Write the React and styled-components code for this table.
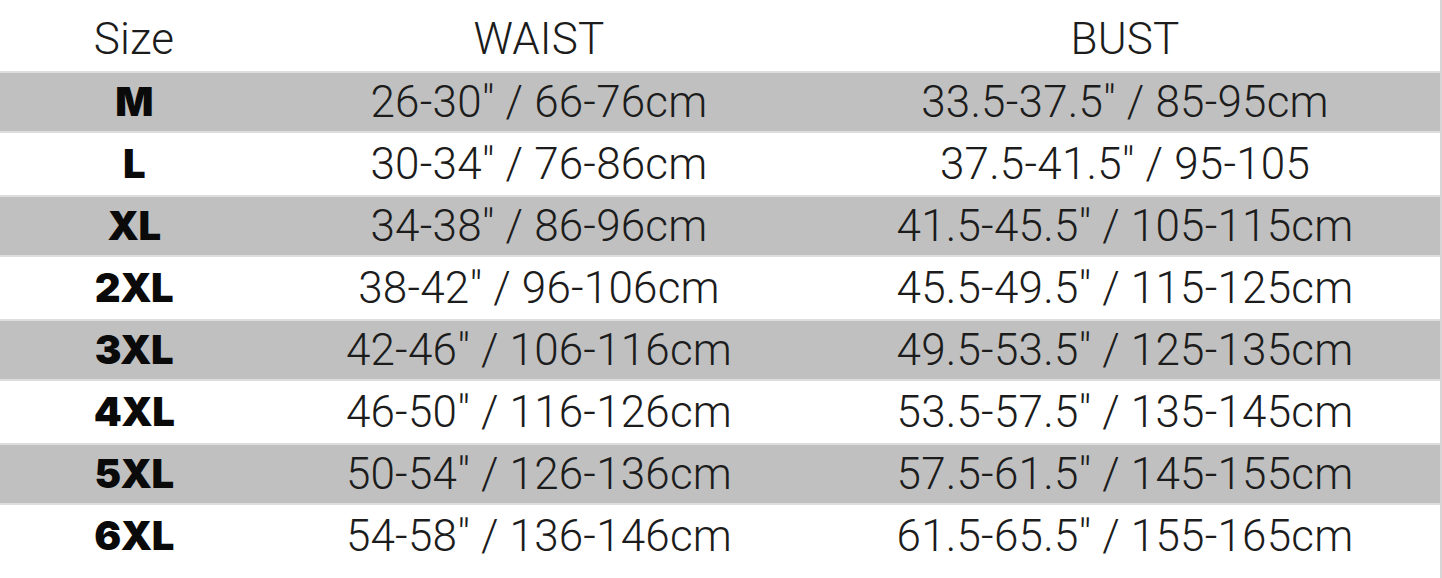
import React from 'react'
import styled, { createGlobalStyle } from 'styled-components'

const GlobalStyle = createGlobalStyle`
  html, body {
    margin: 0;
    padding: 0;
    background: #ffffff;
  }

  body {
    font-family: Roboto, 'Liberation Sans', sans-serif;
    color: #1c1c1c;
  }
`

const Chart = styled.div`
  width: 1440px;
  height: 578px;
  border-right: 2px solid #d6d6d6;
  background: #ffffff;
`

const Row = styled.div`
  display: grid;
  grid-template-columns: 268px 542px 630px;
  align-items: center;
  box-sizing: border-box;
  height: ${({ $header }) => ($header ? '71px' : '62px')};
  padding-top: ${({ $header }) => ($header ? '6px' : '0')};
  background: ${({ $shaded }) => ($shaded ? '#c0c0c0' : 'transparent')};
  border-top: 2px solid ${({ $shaded }) => ($shaded ? '#dedede' : 'transparent')};
  border-bottom: 2px solid ${({ $shaded }) => ($shaded ? '#dedede' : 'transparent')};
`

const Cell = styled.div`
  text-align: center;
  font-size: 44px;
  line-height: 1;
  font-weight: 300;
  letter-spacing: 0.2px;
  white-space: nowrap;
`

const SizeCell = styled(Cell)`
  font-family: Inter, Roboto, sans-serif;
  font-weight: 900;
  color: #0a0a0a;
  font-size: 40px;
  letter-spacing: -0.5px;
`

const rows = [
  ['M', '26-30″ / 66-76cm', '33.5-37.5″ / 85-95cm'],
  ['L', '30-34″ / 76-86cm', '37.5-41.5″ / 95-105'],
  ['XL', '34-38″ / 86-96cm', '41.5-45.5″ / 105-115cm'],
  ['2XL', '38-42″ / 96-106cm', '45.5-49.5″ / 115-125cm'],
  ['3XL', '42-46″ / 106-116cm', '49.5-53.5″ / 125-135cm'],
  ['4XL', '46-50″ / 116-126cm', '53.5-57.5″ / 135-145cm'],
  ['5XL', '50-54″ / 126-136cm', '57.5-61.5″ / 145-155cm'],
  ['6XL', '54-58″ / 136-146cm', '61.5-65.5″ / 155-165cm'],
]

const App = () => (
  <>
    <GlobalStyle />
    <Chart>
      <Row $header>
        <Cell>Size</Cell>
        <Cell>WAIST</Cell>
        <Cell>BUST</Cell>
      </Row>
      {rows.map(([size, waist, bust], i) => (
        <Row key={size} $shaded={i % 2 === 0}>
          <SizeCell>{size}</SizeCell>
          <Cell>{waist}</Cell>
          <Cell>{bust}</Cell>
        </Row>
      ))}
    </Chart>
  </>
)

export default App
